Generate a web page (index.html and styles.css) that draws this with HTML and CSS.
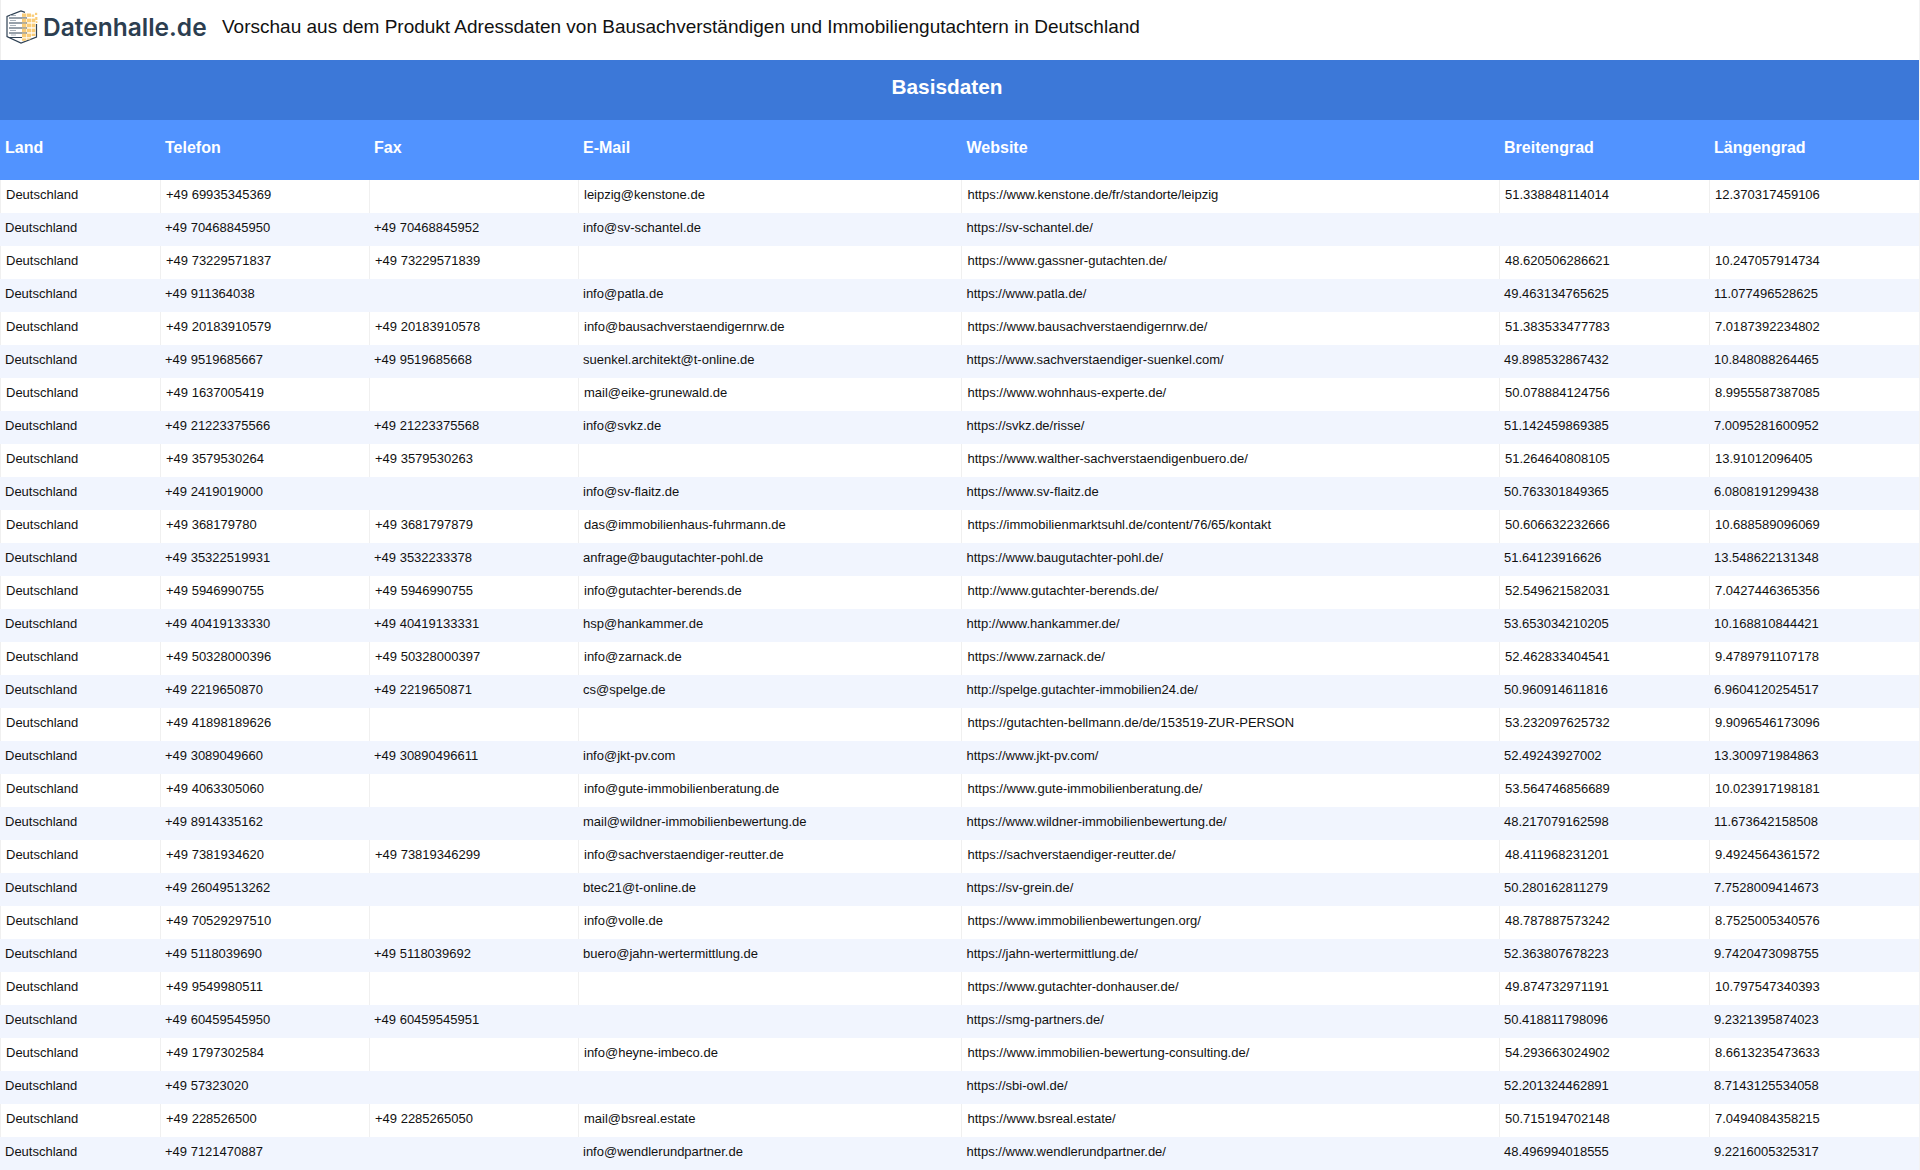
FILE: index.html
```html
<!DOCTYPE html>
<html lang="de">
<head>
<meta charset="utf-8">
<title>Vorschau – Adressdaten</title>
<link rel="stylesheet" href="styles.css">
</head>
<body>
<header class="topbar">
  <div class="logo">
    <svg class="logo-mark" width="32" height="34" viewBox="0 0 32 34" aria-hidden="true">
      <path d="M19 2.4 15 1 1 6.5V26.5L15 33 30.5 27V14" fill="none" stroke="#2f4254" stroke-width="1.2"/>
      <path d="M3 8H21M3 13H21M3 18H21M3 23H21M3 27.5H16" stroke="#2f4254" stroke-width="1"/>
      <path d="M4 5.5H10M4 10.5H10M4 15.5H10M4 20.5H10M5 25H10" stroke="#aab3bc" stroke-width="1"/>
      <g fill="#f9cc78">
        <rect x="16" y="3.5" width="4.2" height="3.4"/><rect x="20.8" y="3.5" width="4.2" height="3.4"/>
        <rect x="16" y="8.6" width="4.2" height="3.7"/><rect x="20.8" y="8.6" width="4.2" height="3.7"/><rect x="25.6" y="8.6" width="3.8" height="3.7"/>
        <rect x="16" y="13.6" width="4.2" height="3.7"/><rect x="20.8" y="13.6" width="4.2" height="3.7"/><rect x="25.6" y="13.6" width="3.8" height="3.7"/>
        <rect x="16" y="18.6" width="4.2" height="3.7"/><rect x="20.8" y="18.6" width="4.2" height="3.7"/><rect x="25.6" y="18.6" width="3.8" height="3.7"/>
        <rect x="16" y="23.6" width="4.2" height="3.7"/><rect x="20.8" y="23.6" width="4.2" height="3.7"/><rect x="25.6" y="23.6" width="3.8" height="2.4"/>
        <rect x="16" y="28.4" width="4.2" height="2.4"/><rect x="20.8" y="28.4" width="3.6" height="1.2"/>
        <rect x="25.6" y="4.5" width="2.6" height="2.4"/><rect x="29" y="2.8" width="2.2" height="2.2"/><rect x="29.2" y="7" width="2.2" height="3"/><rect x="29.8" y="11.2" width="1.6" height="1.8"/>
      </g>
    </svg>
    <span class="logo-text">Datenhalle.de</span>
  </div>
  <h1 class="title">Vorschau aus dem Produkt Adressdaten von Bausachverständigen und Immobiliengutachtern in Deutschland</h1>
</header>
<h2 class="band">Basisdaten</h2>
<table class="data">
  <colgroup>
    <col class="c-land"><col class="c-tel"><col class="c-fax"><col class="c-mail"><col class="c-web"><col class="c-lat"><col class="c-lon">
  </colgroup>
  <thead>
    <tr><th>Land</th><th>Telefon</th><th>Fax</th><th>E-Mail</th><th>Website</th><th>Breitengrad</th><th>Längengrad</th></tr>
  </thead>
  <tbody>
    <tr><td>Deutschland</td><td>+49 69935345369</td><td></td><td>leipzig@kenstone.de</td><td>https://www.kenstone.de/fr/standorte/leipzig</td><td>51.338848114014</td><td>12.370317459106</td></tr>
    <tr><td>Deutschland</td><td>+49 70468845950</td><td>+49 70468845952</td><td>info@sv-schantel.de</td><td>https://sv-schantel.de/</td><td></td><td></td></tr>
    <tr><td>Deutschland</td><td>+49 73229571837</td><td>+49 73229571839</td><td></td><td>https://www.gassner-gutachten.de/</td><td>48.620506286621</td><td>10.247057914734</td></tr>
    <tr><td>Deutschland</td><td>+49 911364038</td><td></td><td>info@patla.de</td><td>https://www.patla.de/</td><td>49.463134765625</td><td>11.077496528625</td></tr>
    <tr><td>Deutschland</td><td>+49 20183910579</td><td>+49 20183910578</td><td>info@bausachverstaendigernrw.de</td><td>https://www.bausachverstaendigernrw.de/</td><td>51.383533477783</td><td>7.0187392234802</td></tr>
    <tr><td>Deutschland</td><td>+49 9519685667</td><td>+49 9519685668</td><td>suenkel.architekt@t-online.de</td><td>https://www.sachverstaendiger-suenkel.com/</td><td>49.898532867432</td><td>10.848088264465</td></tr>
    <tr><td>Deutschland</td><td>+49 1637005419</td><td></td><td>mail@eike-grunewald.de</td><td>https://www.wohnhaus-experte.de/</td><td>50.078884124756</td><td>8.9955587387085</td></tr>
    <tr><td>Deutschland</td><td>+49 21223375566</td><td>+49 21223375568</td><td>info@svkz.de</td><td>https://svkz.de/risse/</td><td>51.142459869385</td><td>7.0095281600952</td></tr>
    <tr><td>Deutschland</td><td>+49 3579530264</td><td>+49 3579530263</td><td></td><td>https://www.walther-sachverstaendigenbuero.de/</td><td>51.264640808105</td><td>13.91012096405</td></tr>
    <tr><td>Deutschland</td><td>+49 2419019000</td><td></td><td>info@sv-flaitz.de</td><td>https://www.sv-flaitz.de</td><td>50.763301849365</td><td>6.0808191299438</td></tr>
    <tr><td>Deutschland</td><td>+49 368179780</td><td>+49 3681797879</td><td>das@immobilienhaus-fuhrmann.de</td><td>https://immobilienmarktsuhl.de/content/76/65/kontakt</td><td>50.606632232666</td><td>10.688589096069</td></tr>
    <tr><td>Deutschland</td><td>+49 35322519931</td><td>+49 3532233378</td><td>anfrage@baugutachter-pohl.de</td><td>https://www.baugutachter-pohl.de/</td><td>51.64123916626</td><td>13.548622131348</td></tr>
    <tr><td>Deutschland</td><td>+49 5946990755</td><td>+49 5946990755</td><td>info@gutachter-berends.de</td><td>http://www.gutachter-berends.de/</td><td>52.549621582031</td><td>7.0427446365356</td></tr>
    <tr><td>Deutschland</td><td>+49 40419133330</td><td>+49 40419133331</td><td>hsp@hankammer.de</td><td>http://www.hankammer.de/</td><td>53.653034210205</td><td>10.168810844421</td></tr>
    <tr><td>Deutschland</td><td>+49 50328000396</td><td>+49 50328000397</td><td>info@zarnack.de</td><td>https://www.zarnack.de/</td><td>52.462833404541</td><td>9.4789791107178</td></tr>
    <tr><td>Deutschland</td><td>+49 2219650870</td><td>+49 2219650871</td><td>cs@spelge.de</td><td>http://spelge.gutachter-immobilien24.de/</td><td>50.960914611816</td><td>6.9604120254517</td></tr>
    <tr><td>Deutschland</td><td>+49 41898189626</td><td></td><td></td><td>https://gutachten-bellmann.de/de/153519-ZUR-PERSON</td><td>53.232097625732</td><td>9.9096546173096</td></tr>
    <tr><td>Deutschland</td><td>+49 3089049660</td><td>+49 30890496611</td><td>info@jkt-pv.com</td><td>https://www.jkt-pv.com/</td><td>52.49243927002</td><td>13.300971984863</td></tr>
    <tr><td>Deutschland</td><td>+49 4063305060</td><td></td><td>info@gute-immobilienberatung.de</td><td>https://www.gute-immobilienberatung.de/</td><td>53.564746856689</td><td>10.023917198181</td></tr>
    <tr><td>Deutschland</td><td>+49 8914335162</td><td></td><td>mail@wildner-immobilienbewertung.de</td><td>https://www.wildner-immobilienbewertung.de/</td><td>48.217079162598</td><td>11.673642158508</td></tr>
    <tr><td>Deutschland</td><td>+49 7381934620</td><td>+49 73819346299</td><td>info@sachverstaendiger-reutter.de</td><td>https://sachverstaendiger-reutter.de/</td><td>48.411968231201</td><td>9.4924564361572</td></tr>
    <tr><td>Deutschland</td><td>+49 26049513262</td><td></td><td>btec21@t-online.de</td><td>https://sv-grein.de/</td><td>50.280162811279</td><td>7.7528009414673</td></tr>
    <tr><td>Deutschland</td><td>+49 70529297510</td><td></td><td>info@volle.de</td><td>https://www.immobilienbewertungen.org/</td><td>48.787887573242</td><td>8.7525005340576</td></tr>
    <tr><td>Deutschland</td><td>+49 5118039690</td><td>+49 5118039692</td><td>buero@jahn-wertermittlung.de</td><td>https://jahn-wertermittlung.de/</td><td>52.363807678223</td><td>9.7420473098755</td></tr>
    <tr><td>Deutschland</td><td>+49 9549980511</td><td></td><td></td><td>https://www.gutachter-donhauser.de/</td><td>49.874732971191</td><td>10.797547340393</td></tr>
    <tr><td>Deutschland</td><td>+49 60459545950</td><td>+49 60459545951</td><td></td><td>https://smg-partners.de/</td><td>50.418811798096</td><td>9.2321395874023</td></tr>
    <tr><td>Deutschland</td><td>+49 1797302584</td><td></td><td>info@heyne-imbeco.de</td><td>https://www.immobilien-bewertung-consulting.de/</td><td>54.293663024902</td><td>8.6613235473633</td></tr>
    <tr><td>Deutschland</td><td>+49 57323020</td><td></td><td></td><td>https://sbi-owl.de/</td><td>52.201324462891</td><td>8.7143125534058</td></tr>
    <tr><td>Deutschland</td><td>+49 228526500</td><td>+49 2285265050</td><td>mail@bsreal.estate</td><td>https://www.bsreal.estate/</td><td>50.715194702148</td><td>7.0494084358215</td></tr>
    <tr><td>Deutschland</td><td>+49 7121470887</td><td></td><td>info@wendlerundpartner.de</td><td>https://www.wendlerundpartner.de/</td><td>48.496994018555</td><td>9.2216005325317</td></tr>
  </tbody>
</table>
</body>
</html>
```

FILE: styles.css
```css
* { box-sizing: border-box; }
html, body { margin: 0; padding: 0; background: #fff; }
body {
  width: 1920px;
  height: 1170px;
  overflow: hidden;
  font-family: "Liberation Sans", Arial, sans-serif;
  color: #111;
  border-right: 1px solid #f2f2f2;
}
.topbar {
  height: 60px;
  display: flex;
  align-items: flex-start;
  border-left: 1px solid #eeeeee;
  padding: 10px 0 0 5px;
}
.logo { display: flex; align-items: flex-start; width: 216px; flex: none; }
.logo-mark { display: block; flex: none; }
.logo-text {
  margin-left: 5px;
  font-family: Inter, "Liberation Sans", sans-serif;
  font-weight: 600;
  font-size: 24.5px;
  line-height: 34px;
  color: #2c3e50;
}
.title {
  margin: 0;
  font-size: 19px;
  font-weight: 400;
  line-height: 33px;
  color: #111;
  white-space: nowrap;
}
.band {
  margin: 0;
  height: 60px;
  padding: 15px 25px 0 0;
  background: #3c78d8;
  color: #fff;
  font-size: 20.8px;
  font-weight: 700;
  line-height: 24px;
  text-align: center;
}
.data {
  width: 1919px;
  table-layout: fixed;
  border-collapse: separate;
  border-spacing: 0;
}
.c-land { width: 160px; }
.c-tel { width: 209px; }
.c-fax { width: 209px; }
.c-mail { width: 383px; }
.c-web { width: 538px; }
.c-lat { width: 210px; }
.c-lon { width: 210px; }
.data th {
  height: 60px;
  padding: 0 0 4px 5px;
  background: #5193ff;
  color: #fff;
  font-size: 16px;
  font-weight: 700;
  line-height: 18px;
  text-align: left;
}
.data td {
  height: 33px;
  padding: 0 0 4px 5px;
  font-size: 13px;
  line-height: 15px;
  color: #111;
  white-space: nowrap;
  overflow: hidden;
}
.data th:nth-child(5),
.data td:nth-child(5) { padding-left: 5.5px; }
.data tbody tr:nth-child(odd) td { border-left: 1px solid #f0f0f0; }
.data tbody tr:nth-child(even) td { background: #f1f5fe; }
```
